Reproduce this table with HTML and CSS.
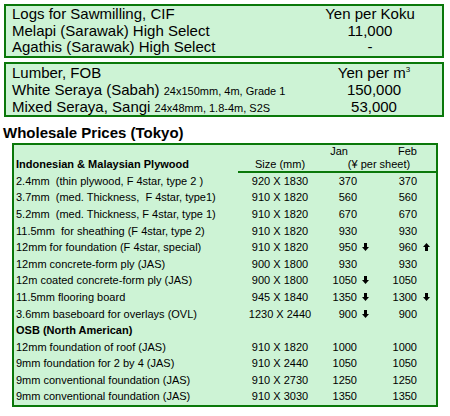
FILE: index.html
```html
<!DOCTYPE html>
<html>
<head>
<meta charset="utf-8">
<link rel="stylesheet" href="styles.css">
</head>
<body>
<div class="page">
  <div class="box box1">
    <div class="lbl">Logs for Sawmilling, CIF</div><div class="val">Yen per Koku</div>
    <div class="lbl">Melapi (Sarawak) High Select</div><div class="val">11,000</div>
    <div class="lbl">Agathis (Sarawak) High Select</div><div class="val">-</div>
  </div>
  <div class="box box2">
    <div class="lbl">Lumber, FOB</div><div class="val">Yen per m<sup class="sup">3</sup></div>
    <div class="lbl">White Seraya (Sabah) <span class="small">24x150mm, 4m, Grade 1</span></div><div class="val">150,000</div>
    <div class="lbl">Mixed Seraya, Sangi <span class="small">24x48mm, 1.8-4m, S2S</span></div><div class="val">53,000</div>
  </div>
  <h2 class="heading">Wholesale Prices (Tokyo)</h2>
  <div class="box box3">
    <div class="c"></div><div class="c"></div><div class="c jan-h">Jan</div><div class="c"></div><div class="c feb-h">Feb</div><div class="c"></div>

    <div class="c h2 lab b">Indonesian &amp; Malaysian Plywood</div><div class="c h2 line ctr">Size (mm)</div><div class="c h2 line ctr yen">(¥ per sheet)</div>

    <div class="c lab">2.4mm  (thin plywood, F 4star, type 2 )</div><div class="c ctr">920 X 1830</div><div class="c num">370</div><div class="c ja"></div><div class="c num">370</div><div class="c fa"></div>
    <div class="c lab">3.7mm  (med. Thickness,  F 4star, type1)</div><div class="c ctr">910 X 1820</div><div class="c num">560</div><div class="c ja"></div><div class="c num">560</div><div class="c fa"></div>
    <div class="c lab">5.2mm  (med. Thickness, F 4star, type 1)</div><div class="c ctr">910 X 1820</div><div class="c num">670</div><div class="c ja"></div><div class="c num">670</div><div class="c fa"></div>
    <div class="c lab">11.5mm  for sheathing (F 4star, type 2)</div><div class="c ctr">910 X 1820</div><div class="c num">930</div><div class="c ja"></div><div class="c num">930</div><div class="c fa"></div>
    <div class="c lab">12mm for foundation (F 4star, special)</div><div class="c ctr">910 X 1820</div><div class="c num">950</div><div class="c ja"><svg class="arr" viewBox="0 0 7 8"><path d="M2 0h3v4h2L3.5 8 0 4h2z"/></svg></div><div class="c num">960</div><div class="c fa"><svg class="arr" viewBox="0 0 7 8"><path d="M3.5 0 7 4H5v4H2V4H0z"/></svg></div>
    <div class="c lab">12mm concrete-form ply (JAS)</div><div class="c ctr">900 X 1800</div><div class="c num">930</div><div class="c ja"></div><div class="c num">930</div><div class="c fa"></div>
    <div class="c lab">12m coated concrete-form ply (JAS)</div><div class="c ctr">900 X 1800</div><div class="c num">1050</div><div class="c ja"><svg class="arr" viewBox="0 0 7 8"><path d="M2 0h3v4h2L3.5 8 0 4h2z"/></svg></div><div class="c num">1050</div><div class="c fa"></div>
    <div class="c lab">11.5mm flooring board</div><div class="c ctr">945 X 1840</div><div class="c num">1350</div><div class="c ja"><svg class="arr" viewBox="0 0 7 8"><path d="M2 0h3v4h2L3.5 8 0 4h2z"/></svg></div><div class="c num">1300</div><div class="c fa"><svg class="arr" viewBox="0 0 7 8"><path d="M2 0h3v4h2L3.5 8 0 4h2z"/></svg></div>
    <div class="c lab">3.6mm baseboard for overlays (OVL)</div><div class="c ctr">1230 X 2440</div><div class="c num">900</div><div class="c ja"><svg class="arr" viewBox="0 0 7 8"><path d="M2 0h3v4h2L3.5 8 0 4h2z"/></svg></div><div class="c num">900</div><div class="c fa"></div>
    <div class="c lab b">OSB (North American)</div><div class="c"></div><div class="c"></div><div class="c"></div><div class="c"></div><div class="c"></div>
    <div class="c lab">12mm foundation of roof (JAS)</div><div class="c ctr">910 X 1820</div><div class="c num">1000</div><div class="c ja"></div><div class="c num">1000</div><div class="c fa"></div>
    <div class="c lab">9mm foundation for 2 by 4 (JAS)</div><div class="c ctr">910 X 2440</div><div class="c num">1050</div><div class="c ja"></div><div class="c num">1050</div><div class="c fa"></div>
    <div class="c lab">9mm conventional foundation (JAS)</div><div class="c ctr">910 X 2730</div><div class="c num">1250</div><div class="c ja"></div><div class="c num">1250</div><div class="c fa"></div>
    <div class="c lab">9mm conventional foundation (JAS)</div><div class="c ctr">910 X 3030</div><div class="c num">1350</div><div class="c ja"></div><div class="c num">1350</div><div class="c fa"></div>
  </div>
</div>
</body>
</html>
```
FILE: styles.css
```css
* { box-sizing: border-box; }
html, body { margin: 0; padding: 0; background: #ffffff; }
body {
  font-family: "Liberation Sans", Arial, sans-serif;
  color: #000;
}
.page {
  padding: 4px 0 0 4px;
  width: 450px;
}
.box {
  background: #cdf3d5;
  border: 2px solid #0a780a;
}
.box1, .box2 {
  width: 440px;
  display: grid;
  font-size: 15px;
}
.box1 {
  grid-template-columns: 1fr 144px;
  grid-auto-rows: 16.67px;
  line-height: 16.67px;
}
.box2 {
  margin-top: 4px;
  grid-template-columns: 1fr 136px;
  grid-auto-rows: 17px;
  line-height: 17px;
}
.lbl {
  padding-left: 6px;
  white-space: nowrap;
}
.val {
  text-align: center;
  white-space: nowrap;
}
.small { font-size: 11px; }
.sup {
  font-size: 8px;
  line-height: 0;
  vertical-align: 6px;
}
.heading {
  margin: 7px 0 0 -1px;
  font-size: 15px;
  line-height: 18px;
  font-weight: bold;
}
.box3 {
  margin: 1px 0 0 8px;
  width: 426px;
  display: grid;
  grid-template-columns: 224px 84px 35px 21px 39px 19px;
  grid-template-rows: 13px 15px repeat(14, 16.6px);
  font-size: 11px;
  line-height: 13px;
}
.c {
  white-space: pre;
  display: flex;
  align-items: center;
}
.lab { padding-left: 2px; }
.b { font-weight: bold; }
.ctr { justify-content: center; }
.num { justify-content: flex-end; }
.jan-h { justify-content: flex-end; padding-right: 9px; }
.feb-h { justify-content: flex-end; }
.h2 { border-bottom: 2px solid transparent; }
.line { border-bottom-color: #0a780a; }
.yen { grid-column: 3 / 7; }
.ja { padding-left: 5px; }
.fa { padding-left: 6px; }
.arr {
  width: 7px;
  height: 8px;
  fill: #000;
  margin-top: -1px;
}
```
